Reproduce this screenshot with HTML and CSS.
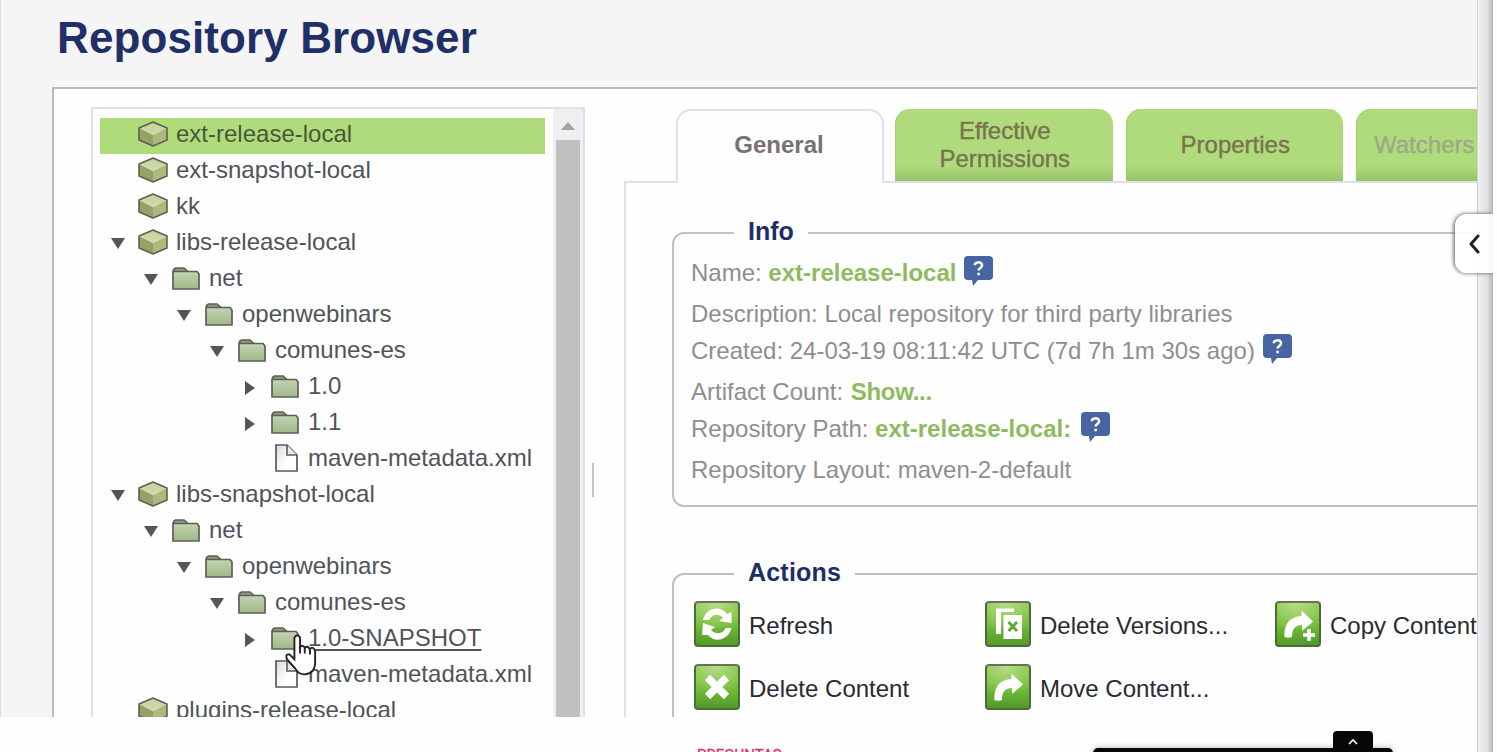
FILE: index.html
```html
<!DOCTYPE html>
<html lang="en">
<head>
<meta charset="utf-8">
<title>Repository Browser</title>
<link rel="stylesheet" href="styles.css">
</head>
<body>
<svg class="defs" width="0" height="0">
  <defs>
    <linearGradient id="gFolder" x1="0" y1="0" x2="0" y2="1"><stop offset="0" stop-color="#c3d3b2"/><stop offset="1" stop-color="#9fb886"/></linearGradient>
    <linearGradient id="gPaper" x1="0" y1="0" x2="1" y2="1"><stop offset="0" stop-color="#dcdcde"/><stop offset=".6" stop-color="#fff"/></linearGradient>
    <linearGradient id="gTop" x1="0" y1="0" x2="0" y2="1"><stop offset="0" stop-color="#c4cf98"/><stop offset="1" stop-color="#d2dcae"/></linearGradient>
    <symbol id="cube" viewBox="0 0 30 26">
      <path d="M1 7 15 14V25L1 19Z" fill="#97a069"/><path d="M29 7 15 14V25L29 19Z" fill="#abbb7d"/><path d="M15 1 29 7 15 14 1 7Z" fill="url(#gTop)"/>
      <path d="M15 1 29 7V19L15 25 1 19V7Z" fill="none" stroke="#5d6150" stroke-width="1.6" stroke-linejoin="round"/>
    </symbol>
    <symbol id="folder" viewBox="0 0 28 23">
      <path d="M1.5 5V2.5L3.5 1H12L16 4.5" fill="#8f9a80" stroke="#5b6054" stroke-width="1.6"/>
      <path d="M1 22V4.5H25L27 7V22Z" fill="url(#gFolder)" stroke="#5b6054" stroke-width="1.7"/>
    </symbol>
    <symbol id="file" viewBox="0 0 23 28">
      <path d="M1 1H12L22 11V27H1Z" fill="url(#gPaper)" stroke="#58595b" stroke-width="1.7"/>
      <path d="M12 1V11H22" fill="#e8e8e8" stroke="#58595b" stroke-width="1.6"/>
    </symbol>
    <symbol id="down" viewBox="0 0 14 11"><path d="M0 0H14L7 11Z" fill="#555"/></symbol>
    <symbol id="right" viewBox="0 0 10 14"><path d="M0 0 10 7 0 14Z" fill="#555"/></symbol>
    <symbol id="help" viewBox="0 0 29 30">
      <path d="M4 0H25Q29 0 29 4V20Q29 24 25 24H14L9 30 8 24H4Q0 24 0 20V4Q0 0 4 0Z" fill="#4766a1"/>
      <path d="M10.8 9.2C10.8 5.6 18.2 5.2 18 9.4 18 12 14.6 12 14.6 14.6M14.6 16.8V19.2" fill="none" stroke="#fff" stroke-width="2.5"/>
    </symbol>
    <symbol id="refresh" viewBox="0 0 46 46">
      <path d="M9 19C12 6 27 4 33 13L37.500 11V22L25 20 29 17C25 12 18 13 15 19Z" fill="#fff"/>
      <path d="M37.500 27C34 40 20 42 14 34L8 34 9 22 21 26 17 29C22 34 29 33 31.500 27Z" fill="#fff"/>
    </symbol>
    <symbol id="cross" viewBox="0 0 46 46"><path d="M13.500 13.500 32.500 32.500M32.500 13.500 13.500 32.500" stroke="#fff" stroke-width="7.500"/></symbol>
    <symbol id="versions" viewBox="0 0 46 46">
      <path d="M11 7.500H29V11H16V33H11Z" fill="#fff"/><path d="M18.500 14H37V38H18.500Z" fill="#fff"/>
      <path d="M23.500 21 32 30M32 21 23.500 30" stroke="#5fa631" stroke-width="2.800"/>
    </symbol>
    <symbol id="move" viewBox="0 0 46 46"><path d="M9.500 36C8.500 23 15 15.500 26.500 15V9.500L38 20.500 27 30V24C20 24 17 28 17 36Q13.500 37.500 9.500 36Z" fill="#fff"/></symbol>
    <symbol id="plus" viewBox="0 0 12 12"><path d="M6 0V12M0 6H12" stroke="#fff" stroke-width="3.600"/></symbol>
  </defs>
</svg>

<div class="stage">
  <div class="screen">
    <h1 class="title">Repository Browser</h1>
    <main class="panel">
      <section class="treebox">
        <ul class="tree">
          <li class="row l0 selected"><span class="tw"></span><svg class="cube"><use href="#cube"/></svg>ext-release-local</li>
          <li class="row l0"><span class="tw"></span><svg class="cube"><use href="#cube"/></svg>ext-snapshot-local</li>
          <li class="row l0"><span class="tw"></span><svg class="cube"><use href="#cube"/></svg>kk</li>
          <li class="row l0"><span class="tw"><svg class="down"><use href="#down"/></svg></span><svg class="cube"><use href="#cube"/></svg>libs-release-local</li>
          <li class="row l1"><span class="tw"><svg class="down"><use href="#down"/></svg></span><svg class="folder"><use href="#folder"/></svg>net</li>
          <li class="row l2"><span class="tw"><svg class="down"><use href="#down"/></svg></span><svg class="folder"><use href="#folder"/></svg>openwebinars</li>
          <li class="row l3"><span class="tw"><svg class="down"><use href="#down"/></svg></span><svg class="folder"><use href="#folder"/></svg>comunes-es</li>
          <li class="row l4"><span class="tw"><svg class="right"><use href="#right"/></svg></span><svg class="folder"><use href="#folder"/></svg>1.0</li>
          <li class="row l4"><span class="tw"><svg class="right"><use href="#right"/></svg></span><svg class="folder"><use href="#folder"/></svg>1.1</li>
          <li class="row l4"><span class="tw"></span><svg class="file"><use href="#file"/></svg>maven-metadata.xml</li>
          <li class="row l0"><span class="tw"><svg class="down"><use href="#down"/></svg></span><svg class="cube"><use href="#cube"/></svg>libs-snapshot-local</li>
          <li class="row l1"><span class="tw"><svg class="down"><use href="#down"/></svg></span><svg class="folder"><use href="#folder"/></svg>net</li>
          <li class="row l2"><span class="tw"><svg class="down"><use href="#down"/></svg></span><svg class="folder"><use href="#folder"/></svg>openwebinars</li>
          <li class="row l3"><span class="tw"><svg class="down"><use href="#down"/></svg></span><svg class="folder"><use href="#folder"/></svg>comunes-es</li>
          <li class="row l4"><span class="tw"><svg class="right"><use href="#right"/></svg></span><svg class="folder"><use href="#folder"/></svg><span class="hover">1.0-SNAPSHOT</span></li>
          <li class="row l4"><span class="tw"></span><svg class="file"><use href="#file"/></svg>maven-metadata.xml</li>
          <li class="row l0"><span class="tw"></span><svg class="cube"><use href="#cube"/></svg>plugins-release-local</li>
        </ul>
        <div class="scrollbar"><span class="up"></span><span class="thumb"></span></div>
      </section>
      <div class="splitter"></div>
      <section class="details">
        <nav class="tabs">
          <div class="tab active">General</div>
          <div class="tab">Effective Permissions</div>
          <div class="tab">Properties</div>
          <div class="tab watchers">Watchers</div>
        </nav>
        <div class="content">
          <fieldset class="box info">
            <legend>Info</legend>
            <p class="line line-name">Name: <b>ext-release-local</b><svg class="help"><use href="#help"/></svg></p>
            <p class="line loose">Description: Local repository for third party libraries</p>
            <p class="line tight">Created: 24-03-19 08:11:42 UTC (7d 7h 1m 30s ago)<svg class="help"><use href="#help"/></svg></p>
            <p class="line loose">Artifact Count: <b class="show">Show...</b></p>
            <p class="line tight">Repository Path: <b>ext-release-local:</b><svg class="help far"><use href="#help"/></svg></p>
            <p class="line loose">Repository Layout: maven-2-default</p>
          </fieldset>
          <fieldset class="box actions">
            <legend>Actions</legend>
            <div class="grid">
              <div class="action"><span class="btn"><svg><use href="#refresh"/></svg></span><span class="label">Refresh</span></div>
              <div class="action"><span class="btn"><svg><use href="#versions"/></svg></span><span class="label">Delete Versions...</span></div>
              <div class="action"><span class="btn"><svg><use href="#move"/></svg><svg class="plus"><use href="#plus"/></svg></span><span class="label">Copy Content</span></div>
              <div class="action"><span class="btn"><svg><use href="#cross"/></svg></span><span class="label">Delete Content</span></div>
              <div class="action"><span class="btn"><svg><use href="#move"/></svg></span><span class="label">Move Content...</span></div>
            </div>
          </fieldset>
        </div>
      </section>
    </main>
    <svg class="cursor" viewBox="0 0 34 45"><path d="M10 24V4Q13-1 16 4V14Q19 11 21 15 24 12 26 16 30 13 32 18V32Q31 42 22 43 15 44 11 37L2 27Q0 21 5 22L10 27Z" fill="#fff" stroke="#222" stroke-width="2"/><path d="M16 13V21M21 15V21M26.500 16V22" stroke="#222" stroke-width="2"/></svg>
  </div>
  <aside class="edge"></aside>
  <button class="drawer"><svg viewBox="0 0 12 20"><path d="M10 2 3 10 10 18" fill="none" stroke="#222" stroke-width="3" stroke-linecap="round" stroke-linejoin="round"/></svg></button>
</div>
<footer class="bottom">
  <span class="questions">PREGUNTAS</span>
  <div class="dock"><span class="dock-tab"><svg viewBox="0 0 10 7"><path d="M1 6 5 2 9 6" fill="none" stroke="#fff" stroke-width="1.600"/></svg></span></div>
</footer>
</body>
</html>
```
FILE: styles.css
```css
* { box-sizing: border-box; }
body { margin: 0; width: 1497px; height: 752px; overflow: hidden; position: relative; background: #fefefe; font: 24px/36px "Liberation Sans", Arial, sans-serif; color: #50535a; }
.defs { position: absolute; }
svg { flex: none; display: block; }
ul, p { margin: 0; padding: 0; list-style: none; }
.stage { display: flex; position: relative; height: 717px; }
.stage::after { content: ""; width: 4px; }
.screen { width: 1477px; height: 717px; overflow: hidden; position: relative; background: #f5f5f5; border-left: 1px solid #dedede; }
.title { margin: 0; padding: 12px 0 0 56px; height: 87px; font-size: 44px; line-height: 52px; letter-spacing: .1px; color: #1f3068; }
.panel { display: flex; margin-left: 51px; width: 1500px; height: 700px; border: 2px solid #bcbcbe; background: #fefefe; padding: 18px 0 0 37px; }

.treebox { width: 494px; flex: none; display: flex; border: 2px solid #e0e0ec; }
.tree { width: 460px; padding: 9px 8px 0 7px; }
.row { display: flex; align-items: center; height: 36px; white-space: nowrap; }
.row.selected { background: #b0db7b; color: #48583a; padding-bottom: 4px; }
.row:not(.selected) { position: relative; top: -2px; }
.l1 { padding-left: 33px; }
.l2 { padding-left: 66px; }
.l3 { padding-left: 99px; }
.l4 { padding-left: 132px; }
.tw { width: 38px; flex: none; padding: 3px 0 0 11px; }
.down { width: 14px; height: 11px; }
.right { width: 10px; height: 14px; margin-left: 2px; }
.cube { width: 30px; height: 26px; margin-right: 8px; }
.folder { width: 28px; height: 23px; margin: 0 9px 0 1px; }
.file { width: 23px; height: 28px; margin: 0 10px 0 5px; }
.hover { text-decoration: underline; text-decoration-thickness: 2px; text-underline-offset: 3px; }
.scrollbar { width: 30px; background: #efeff1; padding: 13px 4px 0 3px; display: flex; flex-direction: column; align-items: center; }
.up { border: 7px solid transparent; border-top: 0; border-bottom: 8px solid #a3a3a5; margin-bottom: 10px; }
.thumb { width: 24px; flex: 1; background: #c0c0c0; }
.splitter { width: 2px; height: 34px; flex: none; margin: 356px 31px 0 7px; background: #c4c4c8; }

.details { flex: none; width: 900px; padding-top: 2px; margin-left: -1px; }
.tabs { display: flex; height: 72px; margin-left: 52px; gap: 13px; }
.tab { width: 217.500px; flex: none; border-radius: 15px 15px 0 0; display: flex; align-items: center; justify-content: center; text-align: center; line-height: 28px; padding: 0 38px 0 40px; color: #77744f; -webkit-text-stroke: .4px #77744f; background: linear-gradient(#b0db7c 78%, #96c468); box-shadow: inset 1px 0 1px #9fcd6d; }
.tab.active { width: 208px; margin-right: -2px; height: 74px; padding: 0 40px 4px 38px; background: #fefefe; border: 2px solid #e0e0ec; border-bottom: 0; box-shadow: none; color: #79716e; font-weight: bold; -webkit-text-stroke: 0; position: relative; z-index: 1; }
.tab.watchers { color: #9aab86; -webkit-text-stroke: .4px #9aab86; justify-content: flex-start; padding-left: 18px; }
.content { border: 2px solid #e0e0ec; height: 600px; padding: 36px 0 0 46px; }
.box { display: block; width: 880px; margin: 0; border: 2px solid #c0c0c0; border-radius: 12px; padding: 0 0 0 17px; min-width: 0; color: #8e8e90; }
.box legend { margin-left: 43px; padding: 0 14px; height: 28px; line-height: 24px; font-size: 25px; font-weight: bold; color: #1e2d67; }
.info { height: 288px; }
.line { display: flex; align-items: center; height: 36px; white-space: pre; }
.line-name { margin-top: 8px; }
.loose { margin-top: 5px; }
.tight { margin-top: 1px; }
.line b { color: #8dbb5e; }
.line .show { margin-left: 1px; letter-spacing: -.3px; }
.help { width: 29px; height: 30px; margin: -4px 0 0 8px; }
.help.far { margin-left: 10px; }
.actions { margin-top: 53px; height: 260px; color: #292a33; padding-left: 20px; }
.actions legend { margin-left: 40px; letter-spacing: .2px; }
.grid { display: grid; grid-template-columns: 291px 290px 290px; row-gap: 17px; padding-top: 13px; }
.action { display: flex; align-items: center; height: 46px; gap: 9px; white-space: nowrap; }
.label { padding-top: 4px; }
.btn { width: 46px; height: 46px; border: 2px solid #4c6e35; border-top-color: #667456; border-radius: 4px; position: relative; background: radial-gradient(ellipse 90% 65% at 45% 0, #b9db8b, #91cc5a 60%, transparent), linear-gradient(#83c24d, #70bb38 55%, #52992a); }
.btn svg { width: 46px; height: 46px; margin: -2px; }
.btn .plus { position: absolute; right: 6px; bottom: 6px; width: 12px; height: 12px; }
.cursor { position: absolute; left: 284px; top: 633px; width: 32px; height: 44px; }
.edge { width: 16px; height: 752px; flex: none; border-left: 1px solid #d2d2d2; background: linear-gradient(90deg, #f0f0f0, #e2e2e2 60%, #b7b7b7); }
.drawer { position: absolute; left: 1455px; top: 214px; width: 38px; height: 59px; border: 0; border-radius: 12px 0 0 12px; background: rgba(255,255,255,.9); box-shadow: -1px 0 4px #555; padding: 0 0 0 13px; clip-path: inset(-6px 0 -6px -6px); }
.drawer svg { width: 12px; height: 20px; }
.bottom { height: 35px; position: relative; }
.questions { position: absolute; left: 697px; top: 30px; font: 15px/16px Roboto, sans-serif; color: #e62b6c; -webkit-text-stroke: .3px #e62b6c; }
.dock { position: absolute; left: 1093px; top: 31px; width: 300px; height: 20px; background: #08080a; border-radius: 5px 5px 0 0; box-shadow: 0 0 6px rgba(0,0,0,.3); }
.dock-tab { position: absolute; left: 240px; top: -17px; width: 40px; height: 22px; border-radius: 4px 4px 0 0; background: #08080a; padding: 7px 15px; }
.dock-tab svg { width: 10px; height: 7px; }
```
